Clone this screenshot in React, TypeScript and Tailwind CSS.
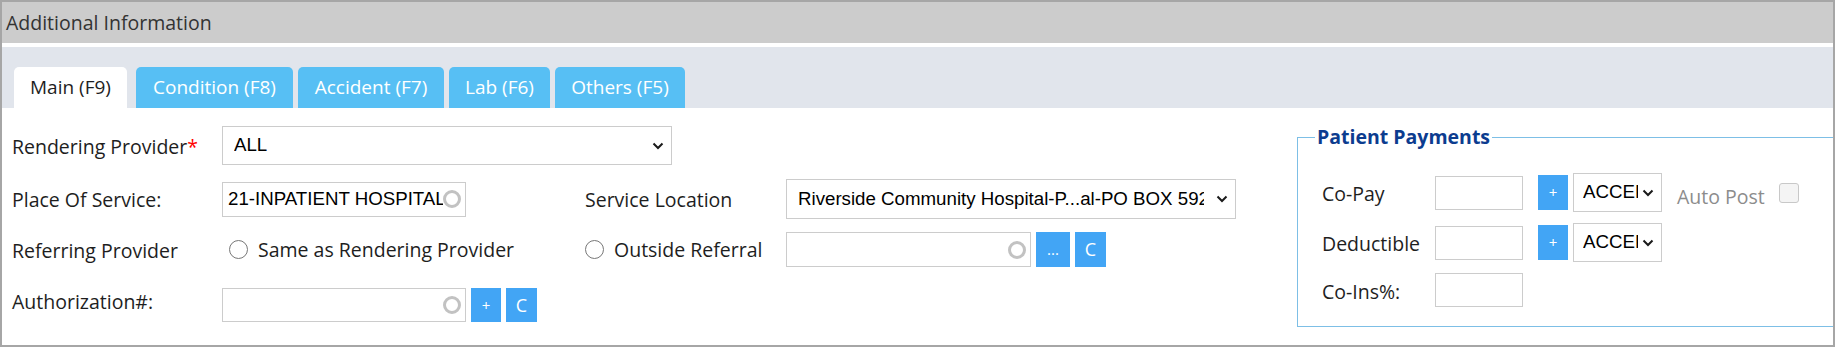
import React from "react"

const sans = "font-['Open_Sans',sans-serif]"
const field = "font-['Liberation_Sans',Arial,sans-serif]"

function Spinner() {
  return <span className="shrink-0 w-[18px] h-[18px] rounded-full border-[3px] border-[#c2c2c2]" />
}

function Chevron() {
  return (
    <svg width="12" height="8" viewBox="0 0 12 8" className="shrink-0">
      <path d="M1.5 1.5 6 6l4.5-4.5" fill="none" stroke="#1a1a1a" strokeWidth="2" />
    </svg>
  )
}

function SelectBox({ value, w, h, textW, pl }: { value: string; w: string; h: string; textW?: string; pl?: string }) {
  return (
    <div className={`${w} ${h} shrink-0 flex items-center border border-[#cccccc] bg-white ${pl ?? "pl-[11px]"} pr-[7px] ${field} text-[18.7px] text-black`}>
      <span className={`${textW ?? "flex-1"} min-w-0 overflow-hidden whitespace-nowrap`}>{value}</span>
      <span className="flex-1" />
      <Chevron />
    </div>
  )
}

function TextBox({ value, w, h, spinner }: { value?: string; w: string; h: string; spinner?: boolean }) {
  return (
    <div className={`${w} ${h} shrink-0 flex items-center border border-[#cccccc] bg-white pl-[5px] pr-[4px] ${field} text-[18.7px] text-black`}>
      <span className="flex-1 min-w-0 overflow-hidden whitespace-nowrap">{value}</span>
      {spinner && <Spinner />}
    </div>
  )
}

function Btn({ label, w, h, small }: { label: string; w: string; h: string; small?: boolean }) {
  return (
    <button className={`${w} ${h} shrink-0 ml-[5px] bg-[#42a5f5] text-white flex items-center justify-center ${sans} ${small ? "text-[15px]" : "text-[18px]"}`}>
      {label}
    </button>
  )
}

function Radio({ label }: { label: string }) {
  return (
    <label className="flex items-center gap-[10px]">
      <span className="w-[19px] h-[19px] rounded-full border-[1.5px] border-[#777777] bg-white" />
      <span>{label}</span>
    </label>
  )
}

const tabs = [
  { label: "Main (F9)", w: "w-[113px]", active: true },
  { label: "Condition (F8)", w: "w-[157px]" },
  { label: "Accident (F7)", w: "w-[146px]" },
  { label: "Lab (F6)", w: "w-[101px]" },
  { label: "Others (F5)", w: "w-[130px]" },
]

export default function App() {
  return (
    <div className={`w-[1835px] h-[347px] border-2 border-[#a6a6a6] overflow-hidden flex flex-col bg-white ${sans} text-[19.5px] text-[#1e1e1e]`}>
      <div className="h-[41px] shrink-0 bg-[#cccccc] flex items-center pl-[4px] text-[#333333]">Additional Information</div>
      <div className="h-[4px] shrink-0" />
      <div className="h-[61px] shrink-0 bg-[#e1e5ec] flex items-end pl-[12px] gap-[5px] text-[19px]">
        {tabs.map((t, i) => (
          <div
            key={t.label}
            className={`${t.w} h-[41px] rounded-t-[5px] flex items-center justify-center ${i === 0 ? "mr-[4px]" : ""} ${
              t.active ? "bg-white text-[#1e1e1e]" : "bg-[#57bff4] text-white"
            }`}
          >
            {t.label}
          </div>
        ))}
      </div>

      <div className="flex-1 flex">
        <div className="w-[1295px] shrink-0 flex flex-col pl-[10px]">
          <div className="mt-[18px] h-[39px] flex items-center">
            <div className="w-[210px] shrink-0 mt-[2px]">
              Rendering Provider<span className="text-[#ff0000]">*</span>
            </div>
            <SelectBox value="ALL" w="w-[450px]" h="h-[39px]" />
          </div>

          <div className="mt-[14px] h-[40px] flex items-center">
            <div className="w-[210px] shrink-0 mt-[2px]">Place Of Service:</div>
            <div className="w-[363px] shrink-0">
              <TextBox value="21-INPATIENT HOSPITAL" w="w-[244px]" h="h-[35px]" spinner />
            </div>
            <div className="w-[201px] shrink-0 mt-[2px]">Service Location</div>
            <SelectBox value="Riverside Community Hospital-P...al-PO BOX 592" w="w-[450px]" h="h-[40px]" textW="w-[406px]" />
          </div>

          <div className="mt-[13px] h-[35px] flex items-center">
            <div className="w-[210px] shrink-0 mt-[2px]">Referring Provider</div>
            <div className="w-[363px] shrink-0 pl-[7px]">
              <Radio label="Same as Rendering Provider" />
            </div>
            <div className="w-[201px] shrink-0">
              <Radio label="Outside Referral" />
            </div>
            <TextBox w="w-[245px]" h="h-[35px]" spinner />
            <Btn label="..." w="w-[34px]" h="h-[35px]" small />
            <Btn label="C" w="w-[31px]" h="h-[35px]" />
          </div>

          <div className="mt-[21px] h-[34px] flex items-center">
            <div className="w-[210px] shrink-0 mb-[7px]">Authorization#:</div>
            <TextBox w="w-[244px]" h="h-[34px]" spinner />
            <Btn label="+" w="w-[30px]" h="h-[34px]" small />
            <Btn label="C" w="w-[31px]" h="h-[34px]" />
          </div>
        </div>

        <fieldset className="mt-[16px] w-[545px] h-[203px] shrink-0 border border-[#7dbfe6] pl-[24px] pt-[23px]">
          <legend className="-ml-[7px] px-[2px] font-bold leading-[26px] text-[#0c3c8f]">Patient Payments</legend>
          <div className="h-[39px] flex items-center">
            <div className="w-[113px] shrink-0 mt-[3px]">Co-Pay</div>
            <TextBox w="w-[88px]" h="h-[34px]" />
            <div className="ml-[10px]" />
            <Btn label="+" w="w-[30px]" h="h-[35px]" small />
            <div className="ml-[5px]">
              <SelectBox value="ACCEPTED" w="w-[89px]" h="h-[39px]" textW="w-[55px]" pl="pl-[9px]" />
            </div>
            <span className="ml-[15px] mt-[8px] text-[#8c8c8c]">Auto Post</span>
            <span className="ml-[14px] w-[20px] h-[20px] rounded-[3px] border border-[#c8c8c8] bg-[#f4f4f4]" />
          </div>
          <div className="mt-[11px] h-[39px] flex items-center">
            <div className="w-[113px] shrink-0 mt-[3px]">Deductible</div>
            <TextBox w="w-[88px]" h="h-[34px]" />
            <div className="ml-[10px]" />
            <Btn label="+" w="w-[30px]" h="h-[35px]" small />
            <div className="ml-[5px]">
              <SelectBox value="ACCEPTED" w="w-[89px]" h="h-[39px]" textW="w-[55px]" pl="pl-[9px]" />
            </div>
          </div>
          <div className="mt-[11px] h-[34px] flex items-center">
            <div className="w-[113px] shrink-0 mt-[3px]">Co-Ins%:</div>
            <TextBox w="w-[88px]" h="h-[34px]" />
          </div>
        </fieldset>
      </div>
    </div>
  )
}
